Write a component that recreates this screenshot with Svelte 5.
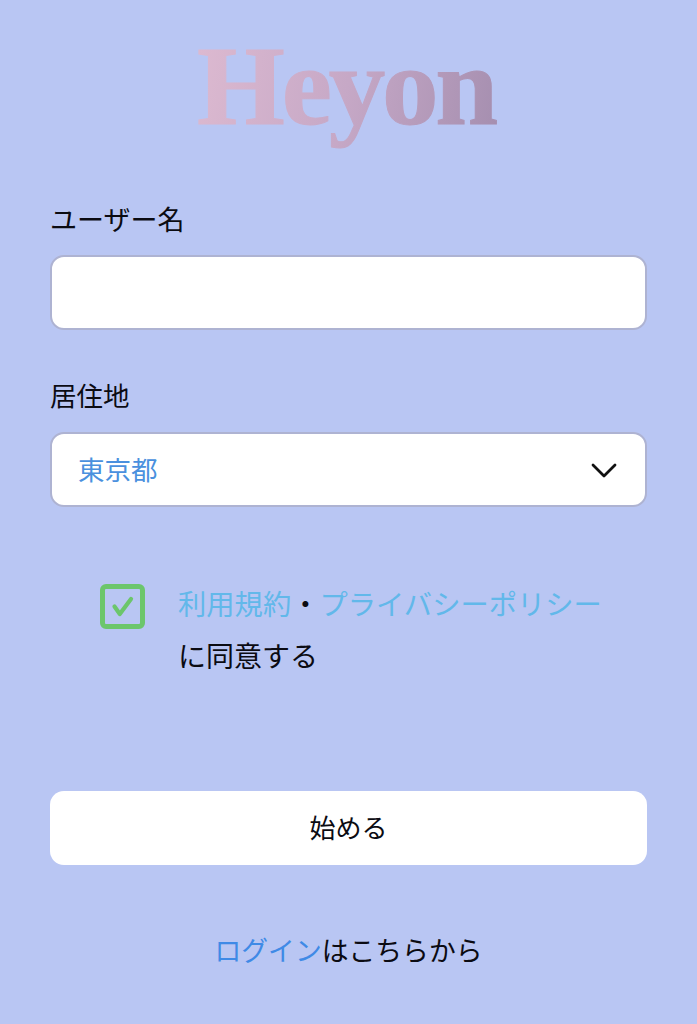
<script>
  let name = $state('');
  let agreed = $state(true);
</script>

<div class="page">
  <h1 class="logo">
    <svg class="logo-art" width="597" height="140" viewBox="0 0 597 140" role="img" aria-label="Heyon">
      <defs>
        <linearGradient id="logo-fill" gradientUnits="userSpaceOnUse" x1="147" y1="40" x2="446" y2="100">
          <stop offset="0" stop-color="#dcb9d0" />
          <stop offset="0.5" stop-color="#c6a8c6" />
          <stop offset="1" stop-color="#a68fb0" />
        </linearGradient>
      </defs>
      <text class="logo-text" x="296" y="103" text-anchor="middle">Heyon</text>
    </svg>
  </h1>

  <label class="field name-field">
    <span class="label">ユーザー名</span>
    <input class="box" type="text" bind:value={name} />
  </label>

  <div class="field place-field">
    <span class="label">居住地</span>
    <div class="box select">
      <span class="value">東京都</span>
      <svg class="chevron" width="26" height="16" viewBox="0 0 26 16" aria-hidden="true">
        <path d="M2 3 L13 14 L24 3" fill="none" stroke="#111" stroke-width="2.8" stroke-linecap="round" stroke-linejoin="round" />
      </svg>
    </div>
  </div>

  <div class="agree">
    <button class="check" type="button" aria-label="同意" onclick={() => (agreed = !agreed)}>
      {#if agreed}
        <svg width="26" height="26" viewBox="0 0 26 26" aria-hidden="true">
          <path d="M4.5 12.5 L9.8 20 L21 5" fill="none" stroke="#6cc66c" stroke-width="4.2" stroke-linecap="round" stroke-linejoin="round" />
        </svg>
      {/if}
    </button>
    <div class="terms">
      <div><span class="link">利用規約</span><span class="dot">・</span><span class="link">プライバシーポリシー</span></div>
      <div class="tail">に同意する</div>
    </div>
  </div>

  <button class="start" type="button">始める</button>

  <p class="login"><span class="login-link">ログイン</span>はこちらから</p>
</div>

<style>
  :global(body) {
    margin: 0;
    background: #b9c6f3;
  }
  .page {
    box-sizing: border-box;
    width: 697px;
    height: 1024px;
    padding: 0 50px;
    background: #b9c6f3;
    color: #0b0b12;
    font-family: "Noto Sans CJK JP", "Noto Sans", sans-serif;
    overflow: hidden;
  }
  .logo {
    margin: 0;
    padding-top: 21px;
    height: 200px;
    box-sizing: border-box;
  }
  .logo-art {
    display: block;
  }
  .logo-text {
    font-family: "Liberation Serif", serif;
    font-weight: 700;
    font-size: 113px;
    letter-spacing: -3.2px;
    fill: url(#logo-fill);
    stroke: url(#logo-fill);
    stroke-width: 1px;
  }
  .field {
    display: block;
  }
  .label {
    display: block;
    font-size: 27px;
    line-height: 38px;
    height: 38px;
    margin-bottom: 17px;
  }
  .place-field {
    margin-top: 46px;
  }
  .place-field .label {
    height: 36px;
    margin-bottom: 20px;
    font-size: 26.5px;
  }
  .box {
    display: block;
    box-sizing: border-box;
    width: 597px;
    height: 75px;
    background: #fff;
    border: 2px solid #aeb3d2;
    border-radius: 14px;
    outline: none;
  }
  .select {
    display: flex;
    align-items: center;
    justify-content: space-between;
    padding: 0 28px 0 26px;
  }
  .value {
    color: #4a90de;
    font-size: 26.5px;
    margin-bottom: 3px;
  }
  .agree {
    display: flex;
    align-items: flex-start;
    margin: 69px 0 0 50px;
    gap: 34px;
  }
  .check {
    box-sizing: border-box;
    flex: none;
    width: 45px;
    height: 45px;
    margin-top: 8px;
    padding: 0;
    display: flex;
    align-items: center;
    justify-content: center;
    background: transparent;
    border: 5.5px solid #6cc66c;
    border-radius: 6px;
  }
  .terms {
    font-size: 28.3px;
    line-height: 53px;
    white-space: nowrap;
    margin-left: -1px;
  }
  .tail {
    font-size: 28px;
  }
  .link {
    color: #62b8ea;
  }
  .dot {
    color: #0b0b12;
  }
  .start {
    display: block;
    box-sizing: border-box;
    width: 597px;
    height: 74px;
    margin-top: 109px;
    padding: 0 0 3px;
    background: #fff;
    border: 0;
    border-radius: 14px;
    color: #0b0b12;
    font-family: inherit;
    font-size: 26px;
  }
  .login {
    margin: 65px 0 0;
    text-align: center;
    font-size: 26.8px;
    line-height: 40px;
  }
  .login-link {
    color: #3f8ae6;
  }
</style>
